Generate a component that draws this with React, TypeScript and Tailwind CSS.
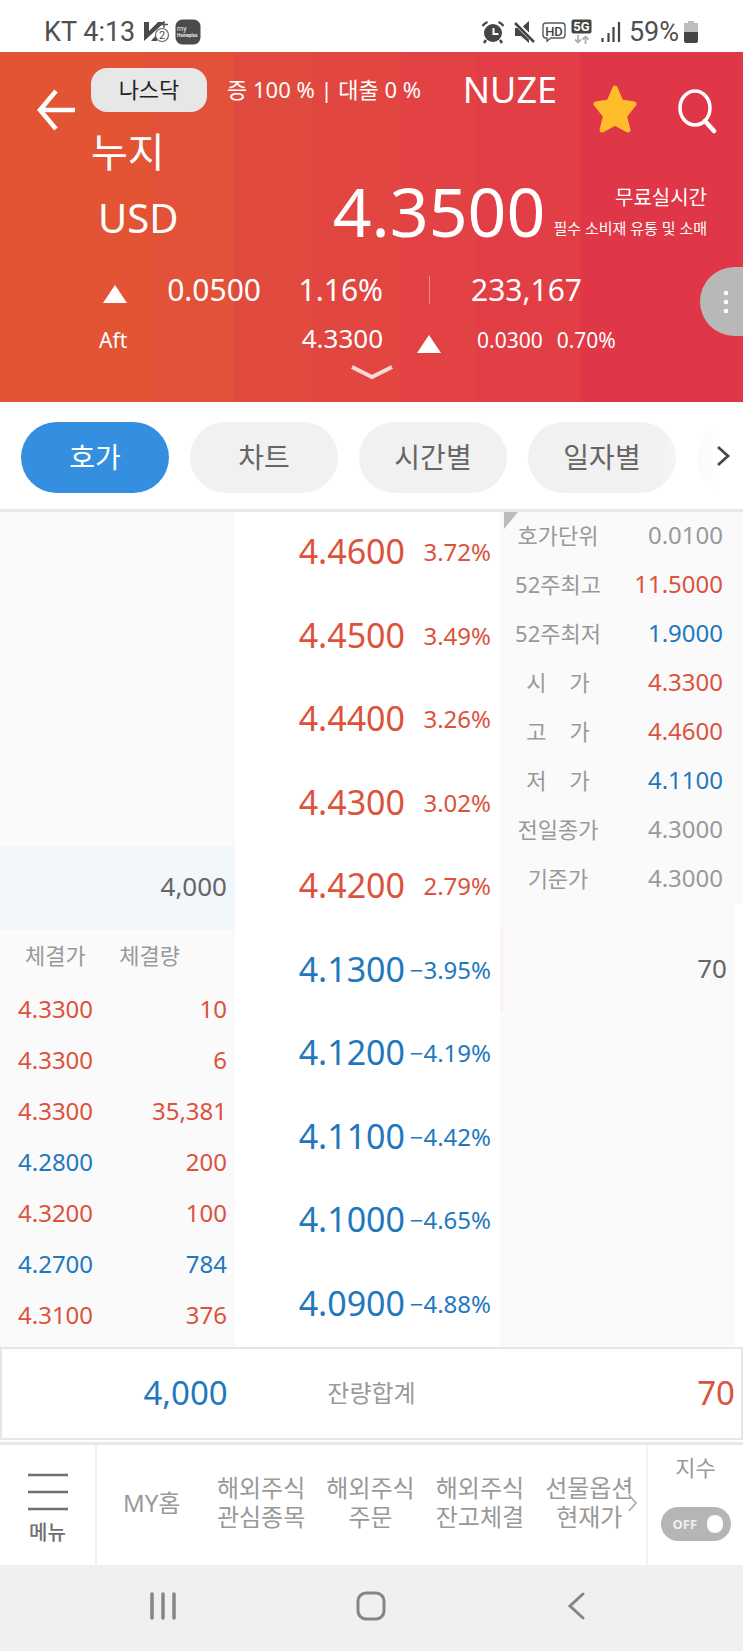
import { useState } from 'react'

type Tone = 'up' | 'down' | 'flat'

const toneClass: Record<Tone, string> = {
  up: 'text-[#dc523c]',
  down: 'text-[#1f78bd]',
  flat: 'text-[#999999]',
}

const tabs = ['호가', '차트', '시간별', '일자별']

const quotes: { price: string; rate: string; tone: Tone }[] = [
  { price: '4.4600', rate: '3.72%', tone: 'up' },
  { price: '4.4500', rate: '3.49%', tone: 'up' },
  { price: '4.4400', rate: '3.26%', tone: 'up' },
  { price: '4.4300', rate: '3.02%', tone: 'up' },
  { price: '4.4200', rate: '2.79%', tone: 'up' },
  { price: '4.1300', rate: '−3.95%', tone: 'down' },
  { price: '4.1200', rate: '−4.19%', tone: 'down' },
  { price: '4.1100', rate: '−4.42%', tone: 'down' },
  { price: '4.1000', rate: '−4.65%', tone: 'down' },
  { price: '4.0900', rate: '−4.88%', tone: 'down' },
]

const trades: { price: string; priceTone: Tone; qty: string; qtyTone: Tone }[] = [
  { price: '4.3300', priceTone: 'up', qty: '10', qtyTone: 'up' },
  { price: '4.3300', priceTone: 'up', qty: '6', qtyTone: 'up' },
  { price: '4.3300', priceTone: 'up', qty: '35,381', qtyTone: 'up' },
  { price: '4.2800', priceTone: 'down', qty: '200', qtyTone: 'up' },
  { price: '4.3200', priceTone: 'up', qty: '100', qtyTone: 'up' },
  { price: '4.2700', priceTone: 'down', qty: '784', qtyTone: 'down' },
  { price: '4.3100', priceTone: 'up', qty: '376', qtyTone: 'up' },
]

const stats: { label: string; value: string; tone: Tone }[] = [
  { label: '호가단위', value: '0.0100', tone: 'flat' },
  { label: '52주최고', value: '11.5000', tone: 'up' },
  { label: '52주최저', value: '1.9000', tone: 'down' },
  { label: '시    가', value: '4.3300', tone: 'up' },
  { label: '고    가', value: '4.4600', tone: 'up' },
  { label: '저    가', value: '4.1100', tone: 'down' },
  { label: '전일종가', value: '4.3000', tone: 'flat' },
  { label: '기준가', value: '4.3000', tone: 'flat' },
]

const shortcuts = [
  ['MY홈'],
  ['해외주식', '관심종목'],
  ['해외주식', '주문'],
  ['해외주식', '잔고체결'],
  ['선물옵션', '현재가'],
]

function StatusBar() {
  return (
    <div className="flex h-[52px] items-center justify-between bg-white pt-3 pr-11 pl-11 font-['Roboto','Noto_Sans',sans-serif] text-[27px] leading-8 text-[#505050]">
      <div className="flex items-center">
        <span className="mr-2">KT 4:13</span>
        <svg width="28" height="24" viewBox="0 0 28 24" className="mr-1">
          <path d="M1 2h5v9l9-9h7L1 21z" fill="#4a4a4a" />
          <path d="M8 21l6-7v7z" fill="#4a4a4a" />
          <circle cx="19" cy="15" r="6.5" fill="#fff" stroke="#666" strokeWidth="1.2" />
          <path d="M21 1v7M18 4.500h7" stroke="#555" strokeWidth="1.400" />
          <text x="19" y="19" fontSize="11" textAnchor="middle" fill="#444">2</text>
        </svg>
        <svg width="26" height="26" viewBox="0 0 26 26">
          <rect x="0.500" y="0.500" width="25" height="25" rx="7" fill="#4b4b4b" />
          <text x="2" y="12" fontSize="7" fill="#eee">my</text>
          <text x="2" y="18" fontSize="4.500" fontWeight="700" fill="#eee">Homeplus</text>
        </svg>
      </div>
      <div className="flex items-center">
        <svg width="24" height="24" viewBox="0 0 24 24" className="mr-2">
          <circle cx="12" cy="13" r="9" fill="#454545" />
          <path d="M5 20l-2 3M19 20l2 3" stroke="#454545" strokeWidth="2.500" />
          <path d="M1.500 6a12 12 0 0 1 5-4M22.500 6a12 12 0 0 0-5-4" stroke="#454545" strokeWidth="2.200" fill="none" />
          <path d="M12.500 8v6h5" stroke="#fff" strokeWidth="2" fill="none" />
        </svg>
        <svg width="24" height="24" viewBox="0 0 24 24" className="mr-1">
          <path d="M2 8h6l8-7v22l-8-7H2z" fill="#454545" />
          <path d="M1 1l21 21" stroke="#fff" strokeWidth="5" />
          <path d="M2 3l19 19" stroke="#454545" strokeWidth="2.500" />
        </svg>
        <svg width="26" height="24" viewBox="0 0 26 24" className="mr-1">
          <path d="M5 3h16q3 0 3 3v9q0 3-3 3H10l-4 3v-3H5q-3 0-3-3V6q0-3 3-3z" fill="none" stroke="#5a5a5a" strokeWidth="1.400" />
          <text x="13" y="15.500" fontSize="13" fontWeight="500" textAnchor="middle" fill="#444">HD</text>
        </svg>
        <svg width="22" height="26" viewBox="0 0 22 26" className="mr-2">
          <rect x="0.500" y="0.500" width="20" height="14" rx="2" fill="#454545" />
          <text x="10.500" y="12" fontSize="13" fontWeight="700" textAnchor="middle" fill="#fff">5G</text>
          <path d="M7 16v7M4 20.500l3 3 3-3M14.500 25v-7M11.500 20.500l3-3 3 3" stroke="#b0b0b0" strokeWidth="1.800" fill="none" />
        </svg>
        <svg width="20" height="22" viewBox="0 0 20 22" className="mr-2">
          <path d="M1.500 17v4M7.500 12v9M12.500 6v15M18 1v20" stroke="#454545" strokeWidth="2.200" />
        </svg>
        <span className="mr-1">59%</span>
        <svg width="16" height="24" viewBox="0 0 16 24">
          <path d="M5 1h6v2h4v9H1V3h4z" fill="#bdbdbd" />
          <path d="M1 12h14v9q0 2-2 2H3q-2 0-2-2z" fill="#454545" />
        </svg>
      </div>
    </div>
  )
}

function UpTriangle() {
  return (
    <svg width="28" height="20" viewBox="0 0 28 20" className="shrink-0">
      <path d="M14 1l12 18H2z" fill="#fff" />
    </svg>
  )
}

function QuoteHeader() {
  return (
    <header className="relative bg-[linear-gradient(90deg,#e25433_0_20%,#e35138_20%_31.500%,#e14a3e_31.500%_42%,#e14641_42%_54%,#e24244_54%_64%,#e13e46_64%_78%,#df3747_78%)] pt-4 text-white">
      <div className="flex">
        <button aria-label="뒤로" className="flex w-[91px] shrink-0 items-center self-start pt-5 pl-9">
          <svg width="40" height="44" viewBox="0 0 40 44" fill="none" stroke="#fff" strokeWidth="4.500">
            <path d="M20 3L4 22l16 19M4 22h35" />
          </svg>
        </button>
        <div className="min-w-0 flex-1">
          <div className="flex h-11 items-center">
            <span className="flex h-11 w-[116px] items-center justify-center rounded-2xl bg-[#e7e7e7] pb-[2px] text-[22px] leading-8 text-[#222222]">
              나스닥
            </span>
            <span className="ml-5 pb-[2px] text-[22px] leading-8">증 100 % | 대출 0 %</span>
            <span className="ml-auto pr-9 text-[36px] leading-[44px]">NUZE</span>
          </div>
          <h1 className="mt-4 text-[40px] leading-[48px]">누지</h1>
        </div>
        <div className="flex shrink-0 items-start gap-10 pt-4 pr-[26px]">
          <button aria-label="관심종목">
            <svg width="44" height="52" viewBox="0 0 44 52">
              <path
                d="M22 4l6 14 13 2-9.500 12 3.500 14-13-7-13 7 3.500-14L3 20l13-2z"
                fill="#ffbd2b"
                stroke="#ffbd2b"
                strokeWidth="5"
                strokeLinejoin="round"
              />
            </svg>
          </button>
          <button aria-label="검색">
            <svg width="40" height="52" viewBox="0 0 40 52" fill="none" stroke="#fff" strokeWidth="3.500">
              <ellipse cx="18" cy="24" rx="15" ry="17" />
              <path d="M28 37l9 10" strokeWidth="4.500" strokeLinecap="round" />
            </svg>
          </button>
        </div>
      </div>

      <div className="flex h-[76px] items-center pr-9 pl-[98px]">
        <span className="pt-2 text-[40px] leading-[48px]">USD</span>
        <span className="ml-auto pb-[6px] text-[68px] leading-[72px]">4.3500</span>
        <div className="ml-2 pb-1 text-right">
          <p className="text-[20px] leading-8">무료실시간</p>
          <p className="text-[15px] leading-7">필수 소비재 유통 및 소매</p>
        </div>
      </div>

      <div className="grid grid-cols-[140fr_121fr_122fr_92fr_268fr] items-center pt-3 text-[30px] leading-[52px]">
        <span className="flex pt-2 pl-[101px]"><UpTriangle /></span>
        <span className="text-right">0.0500</span>
        <span className="text-right">1.16%</span>
        <span className="mx-auto h-7 w-px bg-white/40" />
        <span className="-ml-1">233,167</span>
      </div>
      <div className="grid grid-cols-[140fr_121fr_122fr_92fr_268fr] items-center pt-[2px] text-[21px] leading-[44px]">
        <span className="pl-[99px]">Aft</span>
        <span />
        <span className="pb-1 text-right text-[26px] leading-10">4.3300</span>
        <span className="flex justify-center pt-2"><UpTriangle /></span>
        <span className="flex gap-[14px] pl-[2px]"><span>0.0300</span><span>0.70%</span></span>
      </div>
      <button aria-label="펼치기" className="mx-auto block pb-[18px]">
        <svg width="44" height="22" viewBox="0 0 44 22" fill="none" stroke="#fff" strokeOpacity="0.8" strokeWidth="4">
          <path d="M2 5l20 10L42 5" />
        </svg>
      </button>

      <button
        aria-label="더보기"
        className="absolute right-0 bottom-[66px] flex h-[69px] w-[43px] items-center justify-center rounded-l-full bg-[#b8b8b8] pl-2"
      >
        <svg width="6" height="24" viewBox="0 0 6 24" fill="#fff">
          <circle cx="3" cy="3" r="2.300" />
          <circle cx="3" cy="12" r="2.300" />
          <circle cx="3" cy="21" r="2.300" />
        </svg>
      </button>
    </header>
  )
}

function OrderBook() {
  return (
    <div className="grid grid-cols-[235fr_265fr_243fr]">
      <section className="flex flex-col bg-[#fafafa]">
        <div className="flex-1" />
        <div className="flex h-[84px] items-center justify-end bg-[#f2f7fc] pr-2 pb-1 text-[26px] text-[#666666]">4,000</div>
        <div className="pb-[6px]">
          <table className="w-full">
            <thead>
              <tr className="h-[54px] text-[22px] text-[#999999]">
                <th className="pb-1 pl-[25px] text-left font-normal">체결가</th>
                <th className="pr-[55px] pb-1 text-right font-normal">체결량</th>
              </tr>
            </thead>
            <tbody>
              {trades.map((t, i) => (
                <tr key={i} className="h-[51px] text-[24px] leading-8">
                  <td className={`pb-[2px] pl-[18px] ${toneClass[t.priceTone]}`}>{t.price}</td>
                  <td className={`pr-2 pb-[2px] text-right ${toneClass[t.qtyTone]}`}>{t.qty}</td>
                </tr>
              ))}
            </tbody>
          </table>
        </div>
      </section>

      <table className="w-full bg-white">
        <tbody>
          {quotes.map((q) => (
            <tr key={q.price} className={`h-[84px] even:h-[83px] ${toneClass[q.tone]}`}>
              <td className="pb-[6px] text-right text-[34px] leading-10">{q.price}</td>
              <td className="w-[95px] pr-[9px] pb-1 text-right text-[24px] leading-10">{q.rate}</td>
            </tr>
          ))}
        </tbody>
      </table>

      <section className="flex flex-col">
        <div className="relative bg-[#fafafa]">
          <svg width="14" height="17" viewBox="0 0 14 17" className="absolute top-0 left-1">
            <path d="M0 0h14L0 17z" fill="#bcbcbc" />
          </svg>
          <table className="w-full">
            <tbody>
              {stats.map((s) => (
                <tr key={s.label} className="h-[49px] leading-8">
                  <th className="w-[116px] pb-1 text-center text-[22px] font-normal whitespace-pre text-[#999999]">{s.label}</th>
                  <td className={`pr-5 pb-1 text-right text-[24px] ${toneClass[s.tone]}`}>{s.value}</td>
                </tr>
              ))}
            </tbody>
          </table>
        </div>
        <div className="mr-2 flex-1 bg-[#fafafa] pt-6">
          <div className="flex h-[83px] items-center justify-end border-l-4 border-[#fdf3f0] pr-2 pb-[2px] text-[26px] text-[#666666]">70</div>
        </div>
      </section>
    </div>
  )
}

function BottomMenu({ indexOn, onToggle }: { indexOn: boolean; onToggle: () => void }) {
  return (
    <nav className="flex h-[123px] border-t-[3px] border-[#e8e8e8] bg-white text-[#999999]">
      <button className="flex w-[97px] shrink-0 flex-col items-center border-r-2 border-[#f2f2f2] pt-[28px] text-[#707070]">
        <svg width="40" height="38" viewBox="0 0 40 38" stroke="#707070" strokeWidth="2.500">
          <path d="M0 2h40M0 19h40M0 36h40" />
        </svg>
        <span className="mt-1 text-[20px] leading-9 font-medium">메뉴</span>
      </button>
      <div className="relative grid flex-1 grid-cols-5 pr-[2px]">
        {shortcuts.map((lines) => (
          <a key={lines.join(' ')} href="#" className="flex flex-col items-center justify-center pb-[6px] text-[24px] leading-[29px] whitespace-nowrap">
            {lines.map((line) => <span key={line}>{line}</span>)}
          </a>
        ))}
        <svg width="10" height="18" viewBox="0 0 10 18" fill="none" stroke="#a5a5a5" strokeWidth="1.500" className="absolute top-[49px] right-2">
          <path d="M1 1l7 8-7 8" />
        </svg>
      </div>
      <label className="flex w-[97px] shrink-0 flex-col items-center border-l-2 border-[#f2f2f2] pt-[6px] text-[22px] leading-8">
        지수
        <input type="checkbox" role="switch" checked={indexOn} onChange={onToggle} className="sr-only" />
        <span className="mt-6 flex h-[34px] w-[70px] items-center justify-between rounded-full bg-[#b5b5b5] pr-2 pl-3 text-[13px] font-bold text-[#f0f0f0]">
          {indexOn ? 'ON' : 'OFF'}
          <span className="h-[18px] w-4 rounded-full bg-white" />
        </span>
      </label>
    </nav>
  )
}

export default function App() {
  const [activeTab, setActiveTab] = useState('호가')
  const [indexOn, setIndexOn] = useState(false)

  return (
    <div className="flex min-h-screen flex-col bg-white font-['Noto_Sans','Noto_Sans_CJK_KR',sans-serif]">
      <StatusBar />
      <QuoteHeader />

      {/* Tabs */}
      <div className="relative overflow-hidden border-b-[3px] border-[#e8e8e8] bg-white pt-5 pb-4 pl-[21px]">
        <div className="flex gap-[21px]">
          {tabs.map((tab) => (
            <button
              key={tab}
              onClick={() => setActiveTab(tab)}
              className={`h-[71px] w-[148px] shrink-0 rounded-full pb-[2px] text-[28px] leading-9 ${
                activeTab === tab ? 'bg-[#358fe0] text-white' : 'bg-[#f1f1f1] text-[#666666]'
              }`}
            >
              {tab}
            </button>
          ))}
          <div className="h-[71px] w-[148px] shrink-0 rounded-full bg-[#f1f1f1]" />
        </div>
        <button
          aria-label="다음 탭"
          className="absolute inset-y-0 right-0 flex w-[84px] items-center justify-end bg-linear-to-r from-white/0 to-white to-70% pr-3"
        >
          <svg width="16" height="22" viewBox="0 0 16 22" fill="none" stroke="#4a4a4a" strokeWidth="2.800">
            <path d="M3 2l10 9-10 9" />
          </svg>
        </button>
      </div>

      <OrderBook />

      {/* Totals */}
      <div className="mb-[2px] grid h-[93px] grid-cols-[235fr_265fr_243fr] items-center border-2 border-[#e6e6e6] bg-white pb-[2px]">
        <span className="pr-2 text-right text-[33px] leading-10 text-[#1f78bd]">4,000</span>
        <span className="pl-2 text-center text-[24px] leading-8 text-[#999999]">잔량합계</span>
        <span className="pr-[6px] text-right text-[33px] leading-10 text-[#dc523c]">70</span>
      </div>

      <BottomMenu indexOn={indexOn} onToggle={() => setIndexOn(!indexOn)} />

      {/* System navigation */}
      <div className="flex flex-1 items-center justify-between bg-[#f0f0f0] pt-5 pr-[150px] pb-6 pl-[148px]">
        <button aria-label="최근 앱">
          <svg width="30" height="30" viewBox="0 0 30 30" stroke="#858585" strokeWidth="3.500" strokeLinecap="round">
            <path d="M4 3v24M15 3v24M26 3v24" />
          </svg>
        </button>
        <button aria-label="홈">
          <svg width="30" height="30" viewBox="0 0 30 30" fill="none" stroke="#858585" strokeWidth="3">
            <rect x="2" y="2" width="26" height="26" rx="8" />
          </svg>
        </button>
        <button aria-label="이전">
          <svg width="30" height="30" viewBox="0 0 30 30" fill="none" stroke="#858585" strokeWidth="3" strokeLinecap="round">
            <path d="M20 3L7 15l13 12" />
          </svg>
        </button>
      </div>
    </div>
  )
}
